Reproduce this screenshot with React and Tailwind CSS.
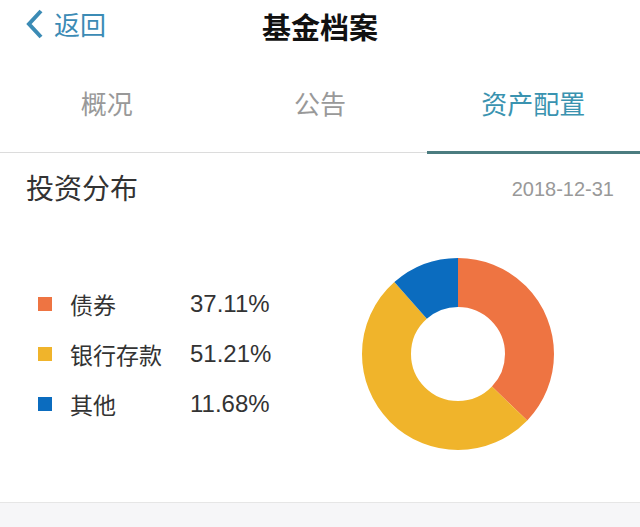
import React from "react";

const data = [
  { name: "债券", value: 37.11, color: "#ee7442" },
  { name: "银行存款", value: 51.21, color: "#f0b42b" },
  { name: "其他", value: 11.68, color: "#0b6cbf" },
];

const Donut = () => {
  const r = 71.5;
  const c = 2 * Math.PI * r;
  let offset = 0;
  return (
    <svg width="194" height="194" viewBox="0 0 194 194">
      <g transform="rotate(-90 97 97)">
        {data.map((d) => {
          const len = (d.value / 100) * c;
          const el = (
            <circle
              key={d.name}
              cx="97"
              cy="97"
              r={r}
              fill="none"
              stroke={d.color}
              strokeWidth="49"
              strokeDasharray={`${len} ${c - len}`}
              strokeDashoffset={-offset}
            />
          );
          offset += len;
          return el;
        })}
      </g>
    </svg>
  );
};

const App = () => {
  return (
    <div
      className="w-[640px] h-[527px] bg-white flex flex-col overflow-hidden"
      style={{ fontFamily: '"Noto Sans CJK SC", "Noto Sans", sans-serif' }}
    >
      <div className="relative h-[52px] flex items-center justify-center">
        <div className="absolute left-[24px] top-[8px] flex items-center text-[#3b8bb5]">
          <svg width="22" height="32" viewBox="0 0 22 32">
            <path d="M17 3 L5 16 L17 29" fill="none" stroke="#3b8bb5" strokeWidth="4" />
          </svg>
          <span className="ml-[8px] text-[26px] leading-none">返回</span>
        </div>
        <h1 className="text-[29px] font-bold text-[#111] leading-none">基金档案</h1>
      </div>

      <div className="grid grid-cols-3 h-[101px] border-b border-[#dcdcdc]">
        <div className="flex items-center justify-center text-[26px] text-[#999]">概况</div>
        <div className="flex items-center justify-center text-[26px] text-[#999]">公告</div>
        <div className="relative flex items-center justify-center text-[26px] text-[#3a93b0]">
          资产配置
          <div className="absolute left-0 right-0 bottom-[-2px] h-[3px] bg-[#4b7c80]" />
        </div>
      </div>

      <div className="flex items-center justify-between px-[26px] pt-[20px]">
        <span className="text-[28px] text-[#333] leading-none">投资分布</span>
        <span className="text-[20px] text-[#999] leading-none mt-[4px]" style={{ fontFamily: '"Liberation Sans", sans-serif' }}>2018-12-31</span>
      </div>

      <div className="flex items-center h-[230px] mt-[38px]">
        <div className="flex flex-col gap-[22px] pl-[38px] w-[360px]">
          {data.map((d) => (
            <div key={d.name} className="flex items-center h-[28px]">
              <div className="w-[14px] h-[14px]" style={{ backgroundColor: d.color }} />
              <span className="ml-[18px] w-[120px] text-[23px] text-[#333]">{d.name}</span>
              <span className="text-[24px] text-[#333]" style={{ fontFamily: '"Liberation Sans", sans-serif' }}>
                {d.value.toFixed(2)}%
              </span>
            </div>
          ))}
        </div>
        <div className="ml-[1px]">
          <Donut />
        </div>
      </div>

      <div className="mt-auto h-[25px] border-t border-[#e6e6e6] bg-[#f6f6f8]" />
    </div>
  );
};

export default App;
